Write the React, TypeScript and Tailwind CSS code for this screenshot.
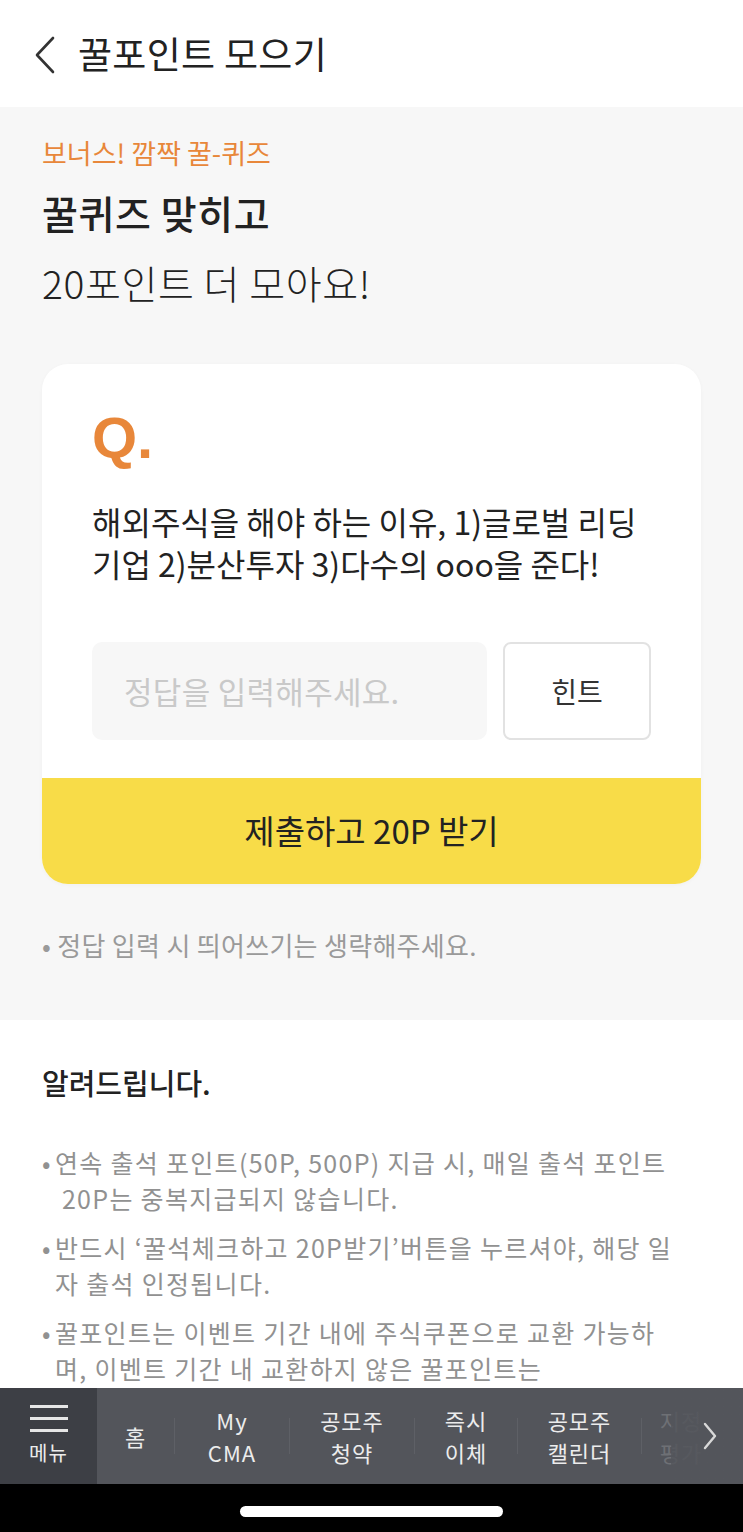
import React from "react";

const font = { fontFamily: '"Noto Sans CJK KR", "Noto Sans", sans-serif' };

const notices = [
  ["연속 출석 포인트(50P, 500P) 지급 시, 매일 출석 포인트", "\u00a020P는 중복지급되지 않습니다."],
  ["반드시 ‘꿀석체크하고 20P받기’버튼을 누르셔야, 해당 일", "자 출석 인정됩니다."],
  ["꿀포인트는 이벤트 기간 내에 주식쿠폰으로 교환 가능하", "며, 이벤트 기간 내 교환하지 않은 꿀포인트는"],
];

const navItems = [
  { w: "w-[114px]", lines: ["My", "CMA"] },
  { w: "w-[124px]", lines: ["공모주", "청약"] },
  { w: "w-[102px]", lines: ["즉시", "이체"] },
  { w: "w-[123px]", lines: ["공모주", "캘린더"] },
];

export default function App() {
  return (
    <div className="w-[743px] h-[1532px] flex flex-col overflow-hidden bg-white text-[#222]" style={font}>
      {/* header */}
      <div className="h-[107px] shrink-0 flex items-center pl-[33px] bg-white">
        <svg width="24" height="38" viewBox="0 0 24 38" fill="none" className="mt-[2px]">
          <path d="M20 2 L4 19 L20 36" stroke="#333" strokeWidth="2.6" strokeLinecap="round" strokeLinejoin="round" />
        </svg>
        <h1 className="ml-[21px] text-[37px] leading-none font-normal tracking-[0.3px] text-[#222]">꿀포인트 모으기</h1>
      </div>

      <div className="flex-1 min-h-0 overflow-hidden">
        {/* quiz section */}
        <div className="bg-[#f7f7f7] px-[42px] pt-[30px] pb-[59px]">
          <p className="text-[27px] leading-[32px] text-[#e8873a]">보너스! 깜짝 꿀-퀴즈</p>
          <h2 className="mt-[8px] text-[39px] leading-[70px] tracking-[0.6px]">
            <span className="font-medium">꿀퀴즈 맞히고</span>
            <br />
            <span className="font-light">20포인트 더 모아요!</span>
          </h2>

          <div className="mt-[47px] bg-white rounded-[26px] overflow-hidden shadow-[0_1px_4px_rgba(0,0,0,0.03)]">
            <div className="px-[50px] pt-[45px] pb-[38px]">
              <div
                className="text-[58px] leading-none font-bold text-[#e8873a]"
                style={{ fontFamily: '"Liberation Sans", Arial, sans-serif' }}
              >
                Q.
              </div>
              <p className="mt-[33px] text-[32px] leading-[42px] whitespace-nowrap text-[#222]">
                해외주식을 해야 하는 이유, 1)글로벌 리딩
                <br />
                기업 2)분산투자 3)다수의 ooo을 준다!
              </p>
              <div className="mt-[58px] flex gap-[16px]">
                <div className="w-[395px] h-[98px] rounded-[10px] bg-[#f7f7f7] flex items-center pl-[32px] text-[31px] tracking-[0.3px] text-[#c9c9c9]">
                  정답을 입력해주세요.
                </div>
                <div className="flex-1 h-[98px] rounded-[8px] border-2 border-[#e2e2e2] flex items-center justify-center text-[28px] text-[#333]">
                  힌트
                </div>
              </div>
            </div>
            <div className="h-[106px] bg-[#f8dc48] flex items-center justify-center text-[33px] text-[#222]">
              제출하고 20P 받기
            </div>
          </div>

          <p className="mt-[45px] text-[26px] leading-[32px] tracking-[0.3px] text-[#9a9a9a]">• 정답 입력 시 띄어쓰기는 생략해주세요.</p>
        </div>

        {/* notice section */}
        <div className="bg-white px-[42px] pt-[42px]">
          <h3 className="text-[29px] leading-[40px] font-medium text-[#222]">알려드립니다.</h3>
          <ul className="mt-[42px] flex flex-col gap-[13px]">
            {notices.map((lines, i) => (
              <li key={i} className="flex text-[25px] leading-[36px] tracking-[1.3px] text-[#919191]">
                <span className="w-[13px] shrink-0 tracking-normal">•</span>
                <span className="whitespace-nowrap">
                  {lines.map((l, j) => (
                    <React.Fragment key={j}>
                      {j > 0 && <br />}
                      {l}
                    </React.Fragment>
                  ))}
                </span>
              </li>
            ))}
          </ul>
        </div>
      </div>

      {/* bottom nav */}
      <div className="h-[96px] shrink-0 flex bg-[#53555b] text-[#ececec] text-[22px] leading-[32px] tracking-[1px]">
        <div className="w-[97px] bg-[#3d3f45] flex flex-col items-center justify-center">
          <div className="flex flex-col gap-[9px] mb-[6px]">
            <div className="w-[38px] h-[3px] bg-[#e6e6e6]" />
            <div className="w-[38px] h-[3px] bg-[#e6e6e6]" />
            <div className="w-[38px] h-[3px] bg-[#e6e6e6]" />
          </div>
          <span className="text-[20px] leading-[29px]">메뉴</span>
        </div>
        <div className="w-[77px] flex items-center justify-center">홈</div>
        {navItems.map((it, i) => (
          <div key={i} className="flex items-center">
            <div className="w-px h-[36px] bg-[#5e6066]" />
            <div className={`${it.w} flex flex-col items-center justify-center`}>
              {it.lines.map((l) => (
                <span key={l}>{l}</span>
              ))}
            </div>
          </div>
        ))}
        <div className="flex items-center relative flex-1 overflow-hidden">
          <div className="w-px h-[36px] bg-[#5e6066]" />
          <div className="w-[78px] flex flex-col items-center justify-center text-[#6e7075]">
            <span>지정</span>
            <span>평가</span>
          </div>
          <div className="absolute inset-y-0 left-[30px] right-0 bg-gradient-to-r from-[#53555b]/80 to-[#53555b]" />
          <svg className="absolute left-[61px] top-[33px]" width="16" height="30" viewBox="0 0 16 30" fill="none">
            <path d="M3 3 L13 15 L3 27" stroke="#d8d8d8" strokeWidth="2.4" strokeLinecap="round" strokeLinejoin="round" />
          </svg>
        </div>
      </div>

      {/* home indicator */}
      <div className="h-[48px] shrink-0 bg-black flex justify-center pt-[22px]">
        <div className="w-[263px] h-[11px] rounded-full bg-white" />
      </div>
    </div>
  );
}
